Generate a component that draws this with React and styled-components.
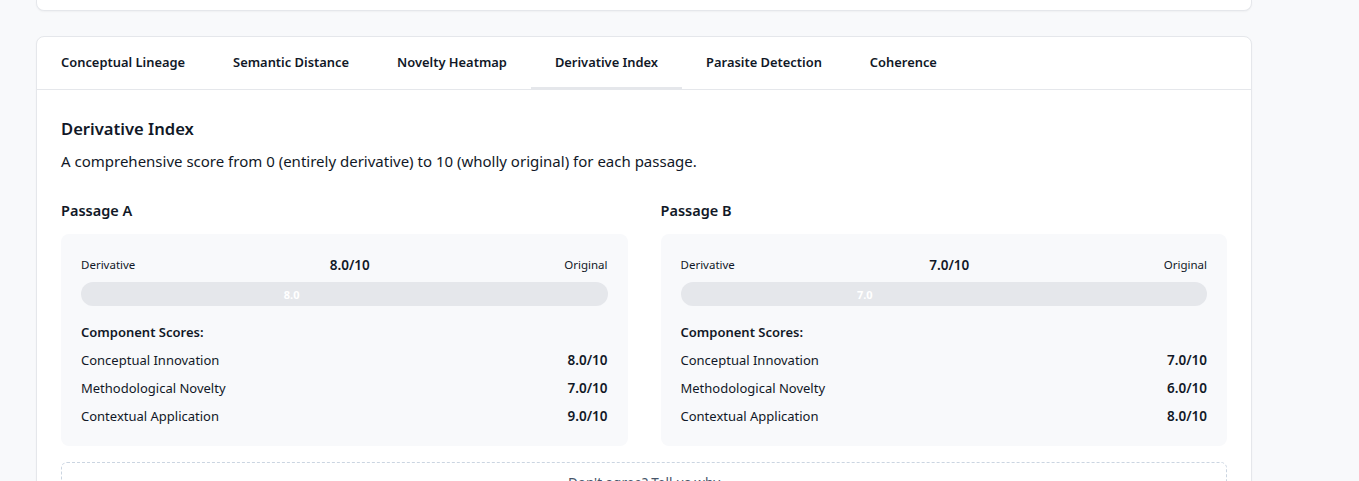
import React from 'react';
import styled, { createGlobalStyle } from 'styled-components';

const GlobalStyle = createGlobalStyle`
  html, body {
    margin: 0;
    padding: 0;
    background: #f8f9fb;
    font-family: 'Noto Sans', 'Open Sans', sans-serif;
    color: #111827;
  }
`;

const Page = styled.div`
  width: 1216px;
  margin-left: 36px;
  display: flex;
  flex-direction: column;
  gap: 25px;
`;

const TopCard = styled.div`
  height: 10px;
  background: #fff;
  border: 1px solid #e5e7eb;
  border-top: none;
  border-radius: 0 0 8px 8px;
  box-shadow: 0 1px 2px rgba(0, 0, 0, 0.04);
`;

const Card = styled.div`
  background: #fff;
  border: 1px solid #e5e7eb;
  border-radius: 8px;
  box-shadow: 0 1px 2px rgba(0, 0, 0, 0.04);
`;

const TabBar = styled.div`
  display: flex;
  border-bottom: 1px solid #e5e7eb;
`;

const Tab = styled.div`
  padding: 15px 24px;
  font-size: 12.9px;
  font-weight: 600;
  line-height: 20px;
  color: #111827;
  border-bottom: 2px solid ${p => (p.$active ? '#e5e7eb' : 'transparent')};
`;

const Content = styled.div`
  padding: 25px 24px 0;
`;

const Title = styled.h2`
  margin: 0;
  font-size: 16.6px;
  font-weight: 600;
  line-height: 28px;
`;

const Description = styled.p`
  margin: 7px 0 0;
  font-size: 15px;
  line-height: 22px;
`;

const Passages = styled.div`
  margin-top: 28px;
  display: grid;
  grid-template-columns: 1fr 1fr;
  gap: 33px;
`;

const PassageHeading = styled.h3`
  margin: 0 0 14px;
  font-size: 14.5px;
  font-weight: 600;
  line-height: 20px;
`;

const Panel = styled.div`
  background: #f8f9fb;
  border-radius: 8px;
  padding: 21px 20px 20px;
`;

const ScaleRow = styled.div`
  display: flex;
  justify-content: space-between;
  align-items: center;
  line-height: 20px;
`;

const ScaleLabel = styled.span`
  font-size: 11.5px;
`;

const ScaleValue = styled.span`
  font-size: 13.5px;
  font-weight: 600;
`;

const Track = styled.div`
  margin-top: 7px;
  height: 24px;
  border-radius: 12px;
  background: #e5e7eb;
  overflow: hidden;
`;

const Fill = styled.div`
  height: 100%;
  display: flex;
  align-items: center;
  justify-content: center;
  font-size: 11px;
  font-weight: 700;
  color: #fff;
`;

const ScoresTitle = styled.div`
  margin-top: 16px;
  font-size: 13px;
  font-weight: 600;
  line-height: 20px;
`;

const ScoreList = styled.div`
  margin-top: 8px;
  display: flex;
  flex-direction: column;
  gap: 8px;
`;

const ScoreRow = styled.div`
  display: flex;
  justify-content: space-between;
  font-size: 13px;
  line-height: 20px;
`;

const ScoreValue = styled.span`
  font-weight: 600;
  font-size: 13.5px;
`;

const Feedback = styled.div`
  margin-top: 16px;
  border: 1px dashed #cbd5e1;
  border-radius: 6px;
  padding: 10px;
  text-align: center;
  font-size: 13.5px;
  line-height: 20px;
  color: #475569;
`;

const tabs = [
  'Conceptual Lineage',
  'Semantic Distance',
  'Novelty Heatmap',
  'Derivative Index',
  'Parasite Detection',
  'Coherence',
];

const passages = [
  {
    name: 'Passage A',
    score: 8,
    parts: [
      ['Conceptual Innovation', 8],
      ['Methodological Novelty', 7],
      ['Contextual Application', 9],
    ],
  },
  {
    name: 'Passage B',
    score: 7,
    parts: [
      ['Conceptual Innovation', 7],
      ['Methodological Novelty', 6],
      ['Contextual Application', 8],
    ],
  },
];

const PassageCard = ({ name, score, parts }) => (
  <div>
    <PassageHeading>{name}</PassageHeading>
    <Panel>
      <ScaleRow>
        <ScaleLabel>Derivative</ScaleLabel>
        <ScaleValue>{score.toFixed(1)}/10</ScaleValue>
        <ScaleLabel>Original</ScaleLabel>
      </ScaleRow>
      <Track>
        <Fill style={{ width: `${score * 10}%` }}>{score.toFixed(1)}</Fill>
      </Track>
      <ScoresTitle>Component Scores:</ScoresTitle>
      <ScoreList>
        {parts.map(([label, value]) => (
          <ScoreRow key={label}>
            <span>{label}</span>
            <ScoreValue>{value.toFixed(1)}/10</ScoreValue>
          </ScoreRow>
        ))}
      </ScoreList>
    </Panel>
  </div>
);

const App = () => (
  <>
    <GlobalStyle />
    <Page>
      <TopCard />
      <Card>
        <TabBar>
          {tabs.map(t => (
            <Tab key={t} $active={t === 'Derivative Index'}>
              {t}
            </Tab>
          ))}
        </TabBar>
        <Content>
          <Title>Derivative Index</Title>
          <Description>
            A comprehensive score from 0 (entirely derivative) to 10 (wholly original) for each passage.
          </Description>
          <Passages>
            {passages.map(p => (
              <PassageCard key={p.name} {...p} />
            ))}
          </Passages>
          <Feedback>Don't agree? Tell us why</Feedback>
        </Content>
      </Card>
    </Page>
  </>
);

export default App;
